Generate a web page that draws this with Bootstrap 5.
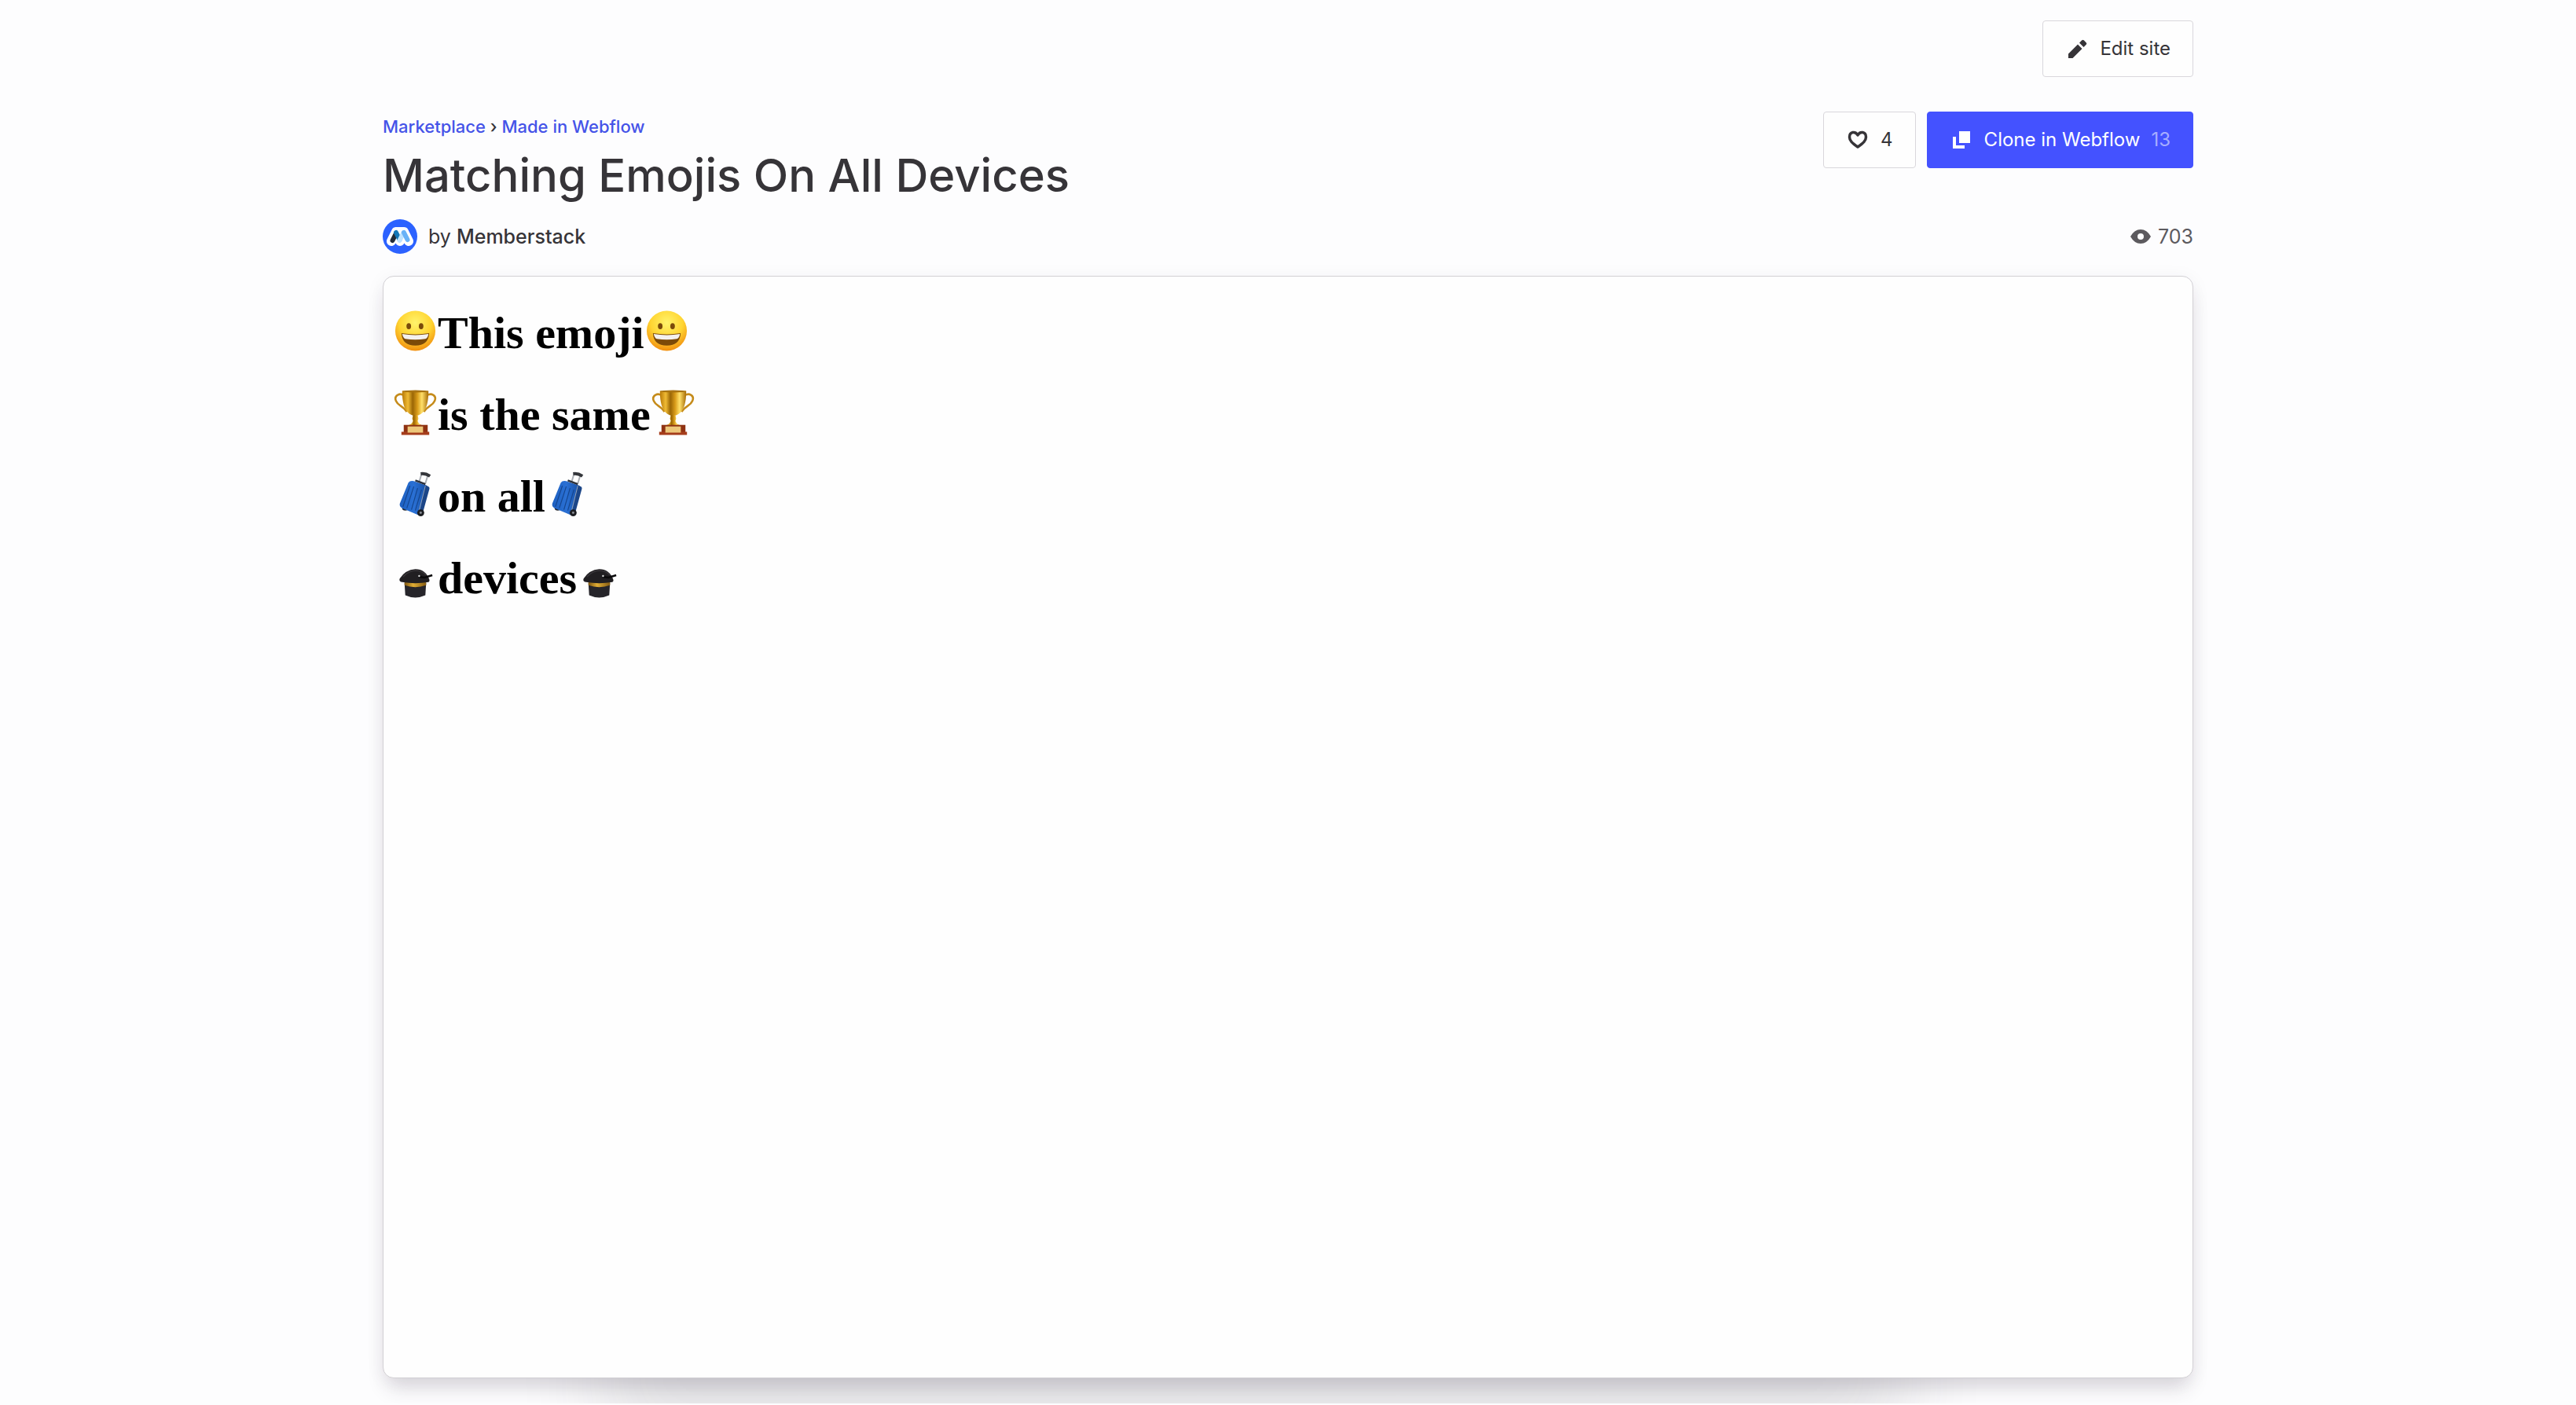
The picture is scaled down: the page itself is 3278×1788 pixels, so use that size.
<!DOCTYPE html>
<html lang="en">
<head>
<meta charset="utf-8">
<meta name="viewport" content="width=device-width, initial-scale=1">
<title>Matching Emojis On All Devices</title>
<link href="https://cdn.jsdelivr.net/npm/bootstrap@5.3.0/dist/css/bootstrap.min.css" rel="stylesheet">
<style>
  body { background: #fdfdfe; color: #363438; font-family: Inter, sans-serif; font-size: 24px; line-height: 32px; }
  .page-wrap { max-width: 2304px; padding-bottom: 32px; }
  .topbar { padding: 26px 0 44px; }
  .tool-btn { --bs-btn-font-size: 24px; --bs-btn-line-height: 32px; --bs-btn-padding-y: 19px; --bs-btn-padding-x: 28px; --bs-btn-border-radius: 4px; --bs-btn-color: #363438; --bs-btn-border-color: #d9d7dc; --bs-btn-bg: #fefefe; }
  .clone-btn { --bs-btn-color: #fff; --bs-btn-bg: #4452ff; --bs-btn-border-color: #4452ff; }
  .tool-btn .tool-icon { margin-right: 12px; }
  .actions { gap: 14px; }
  .clone-count { color: #a6adff; margin-left: 14px; }
  .tool-icon { width: 32px; height: 32px; flex: none; }
  .crumbs { font-size: 22px; font-weight: 500; line-height: 32px; padding-top: 3px; }
  .crumbs a, .author a { text-decoration: none; }
  .crumbs a { color: #4553e8; }
  .site-title { font-size: 58px; font-weight: 500; line-height: 68px; margin: 12px 0 0; }
  .byline { margin: 22px 0 28px; }
  .author { gap: 14px; font-size: 25px; }
  .author a { color: #363438; font-weight: 500; }
  .avatar { width: 44px; height: 44px; }
  .views { color: #5c5a5e; gap: 6px; font-size: 25px; }
  .stage { position: relative; z-index: 0; }
  .stage::before { content: ""; position: absolute; z-index: -1; left: 12%; right: 16%; bottom: 100px; height: 200px; box-shadow: 0 200px 110px rgba(50,46,54,.11); }
  .preview { min-height: 1403px; padding: 38px 12px; background: #fefefe; border: 1px solid #d2d0d4; border-radius: 14px; box-shadow: 0 18px 26px -6px rgba(50,40,60,.16), 0 4px 24px rgba(50,40,60,.06); }
  .preview h2 { font-family: "Liberation Serif", serif; font-size: 58px; font-weight: 700; line-height: 68px; margin: 0 0 36px; color: #000; }
  .emoji { width: 57px; height: 58px; margin-bottom: 6px; flex: none; }
</style>
</head>
<body>
<svg width="0" height="0" class="position-absolute" aria-hidden="true">
  <defs>
    <radialGradient id="face" cx=".5" cy=".3" r=".72"><stop offset="0" stop-color="#fff36b"/><stop offset=".55" stop-color="#ffd532"/><stop offset="1" stop-color="#f08a0c"/></radialGradient>
    <linearGradient id="gold"><stop offset="0" stop-color="#b87907"/><stop offset=".22" stop-color="#f0bb35"/><stop offset=".4" stop-color="#9a6605"/><stop offset=".58" stop-color="#d99c1a"/><stop offset=".75" stop-color="#ffe06a"/><stop offset="1" stop-color="#a66b05"/></linearGradient>
    <linearGradient id="blue"><stop offset="0" stop-color="#1c5fc0"/><stop offset=".5" stop-color="#2a70d4"/><stop offset="1" stop-color="#174fa4"/></linearGradient>
    <linearGradient id="band"><stop offset="0" stop-color="#7d5510"/><stop offset=".4" stop-color="#e0ad35"/><stop offset="1" stop-color="#855c12"/></linearGradient>
    <symbol id="grin" viewBox="0 0 58 58">
      <circle cx="29" cy="29" r="26" fill="url(#face)"/>
      <ellipse cx="20.500" cy="23" rx="3" ry="4" fill="#7a4a0a"/><ellipse cx="36.500" cy="23" rx="3" ry="4" fill="#7a4a0a"/>
      <path d="M11 32q18 3 36 0q-1 16-18 16T11 32z" fill="#7c4a08"/>
      <path d="M12 33q17 3 34 0q-.5 5-4 6.500q-13 2-26 0q-3-1.500-4-6.500z" fill="#f4f1ee"/>
    </symbol>
    <symbol id="trophy" viewBox="0 0 58 58">
      <path d="M16 8C9 2 1 7 4 14c3 7 8 5 14 14M42 8c8-6 15-1 12 6-3 7-8 5-14 14" fill="none" stroke="#c58b1a" stroke-width="2.600"/>
      <path d="M12 1h34c0 16-3 27-12 31q-5 3-10 0C15 28 12 17 12 1z" fill="url(#gold)"/>
      <ellipse cx="29" cy="1.500" rx="17" ry="1.500" fill="#a97412"/>
      <path d="M26 32h6l1 5-1 3q1 4 7 6H19q6-2 7-6l-1-3z" fill="url(#gold)"/>
      <path d="M14 45h31v10H14z" fill="#8f3212"/><path d="M11 54h36v4H11z" fill="#a53d1b"/>
      <path d="M19 47h20v8H19z" fill="#edc77a"/>
    </symbol>
    <symbol id="luggage" viewBox="0 0 58 58">
      <path d="M34 13l3-10m5 12l3-10" stroke="#aaaeb4" stroke-width="2"/>
      <path d="M36 2.500q6-1 12 3" fill="none" stroke="#34363b" stroke-width="4"/>
      <ellipse cx="16" cy="47" rx="4" ry="3" fill="#20242b"/>
      <path d="M20 14q2-3 7-2l15 5q4 1 3 5L37 53q-1 4-4 3L12 47q-4-2-3-6z" fill="url(#blue)"/>
      <path d="M42 17l4 2q2 1 1 4l-8 29q-2 4-5 3z" fill="#1c4688"/>
      <path d="M42 18L33 54" stroke="#96a2b4" stroke-width="1"/>
      <path d="M22 18l-9 27m14-26l-9 28m14-26l-8 28m13-26l-8 27" stroke="#15468f" stroke-width="1.200"/>
      <path d="M29 11l13 5" stroke="#2b303a" stroke-width="2.500"/>
      <circle cx="36" cy="53" r="4.500" fill="#1c1e22"/><circle cx="36" cy="53" r="1.500" fill="#8b8f96"/>
    </symbol>
    <symbol id="gradcap" viewBox="0 0 58 58">
      <path d="M15 38h28l-1 16q-13 6-26 0z" fill="#26252a"/>
      <path d="M15 37h28v4q-14 5-28 0z" fill="url(#band)"/>
      <path d="M9 32Q16 21 29 20q13 0 18 13 1 3-1 4-17 3-34 0-5-1-3-5z" fill="#211f22"/>
      <path d="M13 30q8-8 16-8 9 0 14 6" fill="none" stroke="#3b383c" stroke-width="1.500"/>
      <path d="M33 30l8 1 10-3" fill="none" stroke="#09080a" stroke-width="2.500"/><circle cx="34" cy="29" r="1.200" fill="#ddd"/>
    </symbol>
  </defs>
</svg>

<main class="page-wrap mx-auto">
  <div class="topbar d-flex justify-content-end">
    <button type="button" class="btn tool-btn d-flex align-items-center">
      <svg class="tool-icon" viewBox="0 0 32 32" fill="#363438" aria-hidden="true"><path d="M4 22.500L16 10.500l5.500 5.500L9.500 28H4zM18 8.500l3.200-3.200q1.300-1.300 2.600 0l2.900 2.900q1.300 1.300 0 2.600L23.500 14z"/></svg>
      Edit site
    </button>
  </div>

  <header class="d-flex justify-content-between align-items-start">
    <div>
      <nav class="crumbs" aria-label="Breadcrumb"><a href="#">Marketplace</a> › <a href="#">Made in Webflow</a></nav>
      <h1 class="site-title">Matching Emojis On All Devices</h1>
    </div>
    <div class="actions d-flex">
      <button type="button" class="btn tool-btn d-flex align-items-center" aria-label="Like, 4 likes">
        <svg class="tool-icon" viewBox="0 0 32 32" aria-hidden="true"><path d="M15 25C8 20 4.500 17 4.500 12.500c0-7 7.500-8 10.500-2.500 3-5.500 10.500-4.500 10.500 2.500C25.500 17 22 20 15 25z" fill="none" stroke="#363438" stroke-width="3.500" stroke-linejoin="round"/></svg>
        <span>4</span>
      </button>
      <button type="button" class="btn tool-btn clone-btn d-flex align-items-center">
        <svg class="tool-icon" viewBox="0 0 32 32" fill="#fff" aria-hidden="true"><path d="M12 5h14v15H12zM4 12h4v11h11v4H4z"/></svg>
        Clone in Webflow <span class="clone-count">13</span>
      </button>
    </div>
  </header>

  <div class="byline d-flex justify-content-between align-items-center">
    <div class="author d-flex align-items-center">
      <svg class="avatar" viewBox="0 0 44 44" role="img" aria-label="Memberstack logo">
        <circle cx="22" cy="22" r="22" fill="#2c62ff"/>
        <path d="M11 28L17 16h10l6 12M17 16l5 12 5-12" fill="none" stroke="#fff" stroke-width="12" stroke-linejoin="round" stroke-linecap="round"/>
        <path d="M12.500 27l4.500-9" stroke="#222c38" stroke-width="6" stroke-linecap="round"/>
        <path d="M17 17l4.500 9" stroke="#1477b8" stroke-width="6" stroke-linecap="round"/>
        <path d="M21.500 27l5-10" stroke="#bfe3ff" stroke-width="6" stroke-linecap="round"/>
        <path d="M27 17l4.500 9" stroke="#68b2f7" stroke-width="6" stroke-linecap="round"/>
      </svg>
      <span>by <a href="#">Memberstack</a></span>
    </div>
    <div class="views d-flex align-items-center">
      <svg class="tool-icon" viewBox="0 0 32 32" fill="#5c5a5e" aria-hidden="true"><path fill-rule="evenodd" d="M3 16Q8 7 16 7t13 9q-5 9-13 9T3 16zm13-4a4 4 0 1 0 0 8 4 4 0 0 0 0-8z"/></svg>
      <span>703</span>
    </div>
  </div>

  <div class="stage">
    <section class="preview">
      <h2 class="d-flex align-items-center"><svg class="emoji"><use href="#grin"/></svg>This emoji<svg class="emoji"><use href="#grin"/></svg></h2>
      <h2 class="d-flex align-items-center"><svg class="emoji"><use href="#trophy"/></svg>is the same<svg class="emoji"><use href="#trophy"/></svg></h2>
      <h2 class="d-flex align-items-center"><svg class="emoji"><use href="#luggage"/></svg>on all<svg class="emoji"><use href="#luggage"/></svg></h2>
      <h2 class="d-flex align-items-center"><svg class="emoji"><use href="#gradcap"/></svg>devices<svg class="emoji"><use href="#gradcap"/></svg></h2>
    </section>
  </div>
</main>
<script src="https://cdn.jsdelivr.net/npm/bootstrap@5.3.0/dist/js/bootstrap.bundle.min.js"></script>
</body>
</html>
